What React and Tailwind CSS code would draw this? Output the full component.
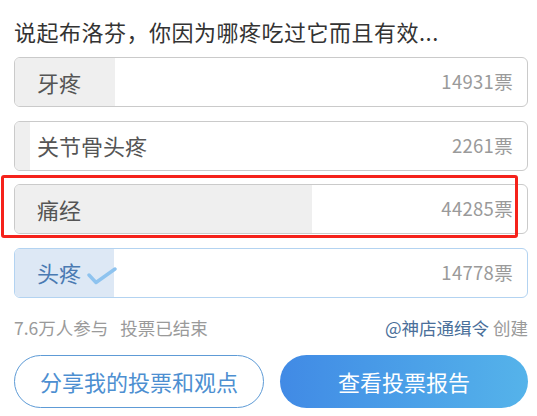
import React from "react";

/**
 * PollCard — finished poll with vote bars and the two action buttons.
 */

const OPTIONS = [
  { id: "tooth", label: "牙疼", votes: 14931 },
  { id: "joint", label: "关节骨头疼", votes: 2261 },
  { id: "period", label: "痛经", votes: 44285, marked: true },
  { id: "head", label: "头疼", votes: 14778, mine: true },
];

const TOTAL = OPTIONS.reduce((sum, o) => sum + o.votes, 0);

function Check() {
  return (
    <svg width="30" height="18" viewBox="0 0 30 18" className="ml-[6px] mt-[6px]">
      <path d="M2 8 L9 15.5 L28 2" fill="none" stroke="#8ec3ef" strokeWidth="3.4" strokeLinecap="round" strokeLinejoin="round" />
    </svg>
  );
}

function OptionRow({ option }) {
  const pct = (option.votes / TOTAL) * 100;
  const mine = option.mine;

  return (
    <div className="relative">
      <div
        className={`relative h-[50px] rounded-[6px] border overflow-hidden ${
          mine ? "border-[#b3d3f1]" : "border-[#cacaca]"
        }`}
      >
        <div
          className={`absolute inset-y-0 left-0 ${mine ? "bg-[#dde8f5]" : "bg-[#efefef]"}`}
          style={{ width: `${pct}%` }}
        />
        <div className="relative h-full flex items-center justify-between pl-[22px] pr-[14px]">
          <span className={`flex items-center text-[22px] ${mine ? "text-[#4a7ab2]" : "text-[#555555]"}`}>
            {option.label}
            {mine && <Check />}
          </span>
          <span className="text-[18.5px] tracking-[0.3px] text-[#9a9a9a]">{option.votes}票</span>
        </div>
      </div>
      {/* red highlight frame */}
      {option.marked && (
        <div className="absolute -left-[13px] right-[10px] -top-[9px] -bottom-[4px] border-[3px] border-[#f5221b] rounded-[3px] pointer-events-none" />
      )}
    </div>
  );
}

export default function App() {
  return (
    <div
      className="w-[537px] h-[416px] bg-white pl-[14px] pr-[9px] pt-[15px] overflow-hidden"
      style={{ fontFamily: '"Noto Sans CJK SC", "Noto Sans", sans-serif' }}
    >
      <h1 className="text-[22px] leading-[32px] tracking-[0.5px] text-[#333333] font-normal">
        说起布洛芬，你因为哪疼吃过它而且有效...
      </h1>

      <div className="mt-[10px] flex flex-col gap-[13.5px]">
        {OPTIONS.map((o) => (
          <OptionRow key={o.id} option={o} />
        ))}
      </div>

      <div className="mt-[18px] flex items-center justify-between text-[17.5px] leading-[24px] text-[#9a9a9a]">
        <span className="flex gap-[12px]">
          <span>7.6万人参与</span>
          <span>投票已结束</span>
        </span>
        <span>
          <span className="text-[#4a6f9a]">@神店通缉令</span> 创建
        </span>
      </div>

      <div className="mt-[15px] flex gap-[16px]">
        <button className="flex-1 h-[53px] rounded-full border border-[#5e9bd6] text-[#4d8fd1] text-[22px]">
          分享我的投票和观点
        </button>
        <button className="flex-1 h-[53px] rounded-full bg-gradient-to-r from-[#418ae5] to-[#55b3ea] text-white text-[22px]">
          查看投票报告
        </button>
      </div>
    </div>
  );
}
